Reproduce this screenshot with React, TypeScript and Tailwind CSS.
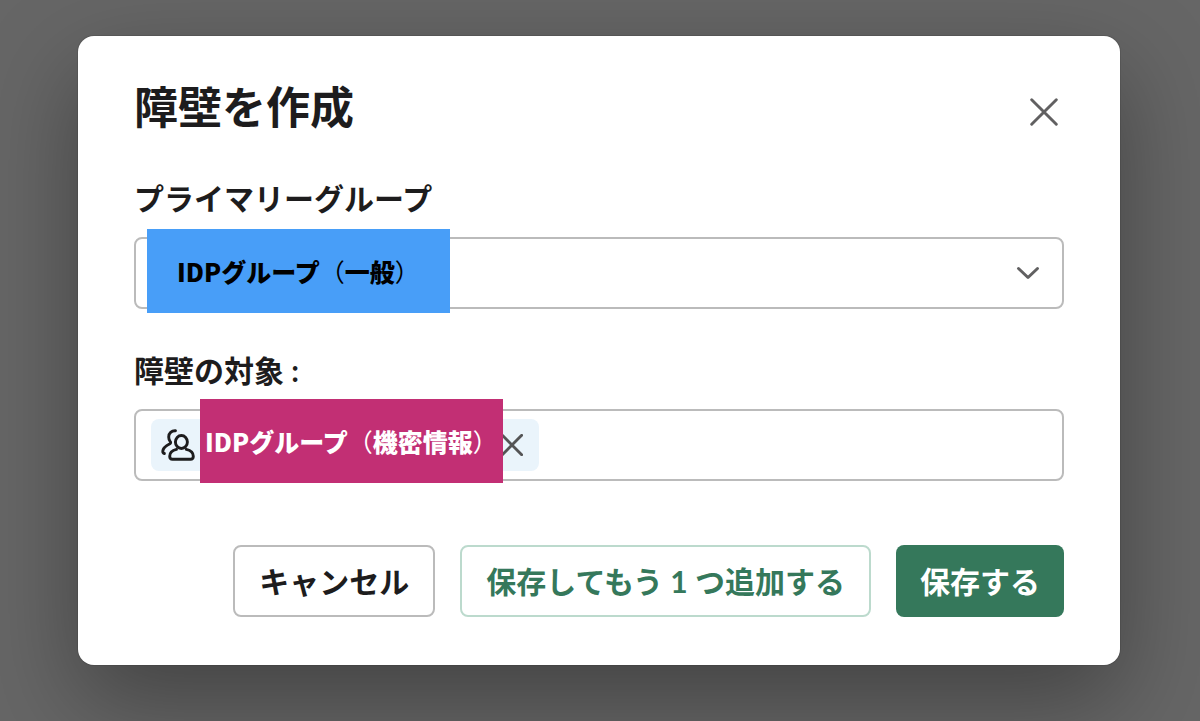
import { useState } from "react";

function CloseIcon({ className }: { className: string }) {
  return (
    <svg viewBox="0 0 28 28" className={className} fill="none" stroke="currentColor" strokeLinecap="round" aria-hidden="true">
      <path d="M1.7 1.7 26.3 26.3M26.3 1.7 1.7 26.3" />
    </svg>
  );
}

function MembersIcon() {
  return (
    <svg
      viewBox="0 0 34 32"
      className="h-8 w-[34px] shrink-0"
      fill="none"
      stroke="currentColor"
      strokeWidth="2.9"
      strokeLinecap="round"
      strokeLinejoin="round"
      aria-hidden="true"
    >
      <path d="M14.5 1.8C10.6 1.6 7.6 4 7.7 8c0 2 .6 3.6 1.7 4.9.5.7.2 1.5-.5 1.9C5 16.800 2 19.2 1.8 22.2c-.1 1.300.5 2.100 1.600 2.300" />
      <ellipse cx="20.4" cy="13" rx="6" ry="6.500" />
      <path d="M15.500 20.300C11.300 21.300 8.700 24.200 8.700 27.200c0 2 1 3 2.800 3h18c1.800 0 2.800-1 2.800-3 0-3-2.600-5.900-7-6.900" />
    </svg>
  );
}

export default function App() {
  const [hasTarget, setHasTarget] = useState(true);

  return (
    <div className="min-h-screen overflow-hidden bg-[#666666] py-9 pr-20 pl-[78px] font-['Lato','Noto_Sans_CJK_JP',sans-serif] text-[30px] leading-[44px] font-bold text-[#1d1c1d]">
      <main
        role="dialog"
        aria-labelledby="dialog-title"
        className="rounded-2xl bg-white px-14 pt-[39px] pb-12 shadow-[0_0_0_1px_rgba(29,28,29,0.13),0_36px_96px_rgba(0,0,0,0.35)]"
      >
        <header className="flex items-center justify-between">
          <h1 id="dialog-title" className="text-[44px] leading-[64px] font-bold">
            障壁を作成
          </h1>
          <button type="button" aria-label="閉じる" className="mt-2.5 flex size-10 items-center justify-center text-[#616061]">
            <CloseIcon className="size-7 stroke-[2.9]" />
          </button>
        </header>

        <form onSubmit={(e) => e.preventDefault()}>
          <div className="mt-[37px]">
            <label htmlFor="primary" className="mb-[17px] block">
              プライマリーグループ
            </label>
            <div className="relative">
              <select
                id="primary"
                className="block h-[72px] w-full appearance-none rounded-lg border-2 border-[#bbbbbb] bg-white px-4"
              >
                <option value="general" aria-label="一般"></option>
              </select>
              <svg
                viewBox="0 0 24 14"
                className="pointer-events-none absolute top-[29px] right-6 h-[14px] w-6 text-[#616061]"
                fill="none"
                stroke="currentColor"
                strokeWidth="3"
                strokeLinecap="round"
                strokeLinejoin="round"
                aria-hidden="true"
              >
                <path d="M2.500 2.500 12 11.500 21.500 2.500" />
              </svg>
              <div className="pointer-events-none absolute -top-2 left-[13px] flex h-[84px] w-[303px] items-center bg-[#489ef8] pl-[30px] font-['Noto_Sans_CJK_JP',sans-serif] text-[25px] font-black whitespace-nowrap text-black">
                <span>
                  IDPグループ<span className="font-normal">（</span>一般<span className="font-normal">）</span>
                </span>
              </div>
            </div>
          </div>

          <div className="mt-[39px]">
            <label htmlFor="target" className="mb-[17px] block">
              障壁の対象 :
            </label>
            <div className="flex h-[72px] items-center gap-3 rounded-lg border-2 border-[#bbbbbb] px-[15px]">
              {hasTarget && (
                <div className="relative flex h-[52px] w-[388px] shrink-0 items-center justify-between rounded-lg bg-[#eaf4fb] pr-4 pl-[10px]">
                  <MembersIcon />
                  <button
                    type="button"
                    aria-label="削除"
                    onClick={() => setHasTarget(false)}
                    className="flex items-center justify-center text-[#545455]"
                  >
                    <CloseIcon className="size-[22px] stroke-[3.6]" />
                  </button>
                  <div className="pointer-events-none absolute -top-5 left-[49px] flex h-[84px] w-[303px] items-center bg-[#c22f74] pl-[5px] font-['Noto_Sans_CJK_JP',sans-serif] text-[25px] font-black whitespace-nowrap text-white">
                    <span>
                      IDPグループ<span className="font-normal">（</span>機密情報<span className="font-normal">）</span>
                    </span>
                  </div>
                </div>
              )}
              <input id="target" type="text" className="min-w-0 flex-1 bg-transparent outline-none" />
            </div>
          </div>

          <footer className="mt-16 flex justify-end gap-[25px]">
            <button type="button" className="h-[72px] rounded-lg border-2 border-[#bbbbbb] px-6 whitespace-nowrap">
              キャンセル
            </button>
            <button
              type="button"
              className="h-[72px] rounded-lg border-2 border-[#bcdacd] px-6 whitespace-nowrap text-[#35785b]"
            >
              保存してもう 1 つ追加する
            </button>
            <button type="submit" className="h-[72px] rounded-lg bg-[#35785b] px-6 whitespace-nowrap text-white">
              保存する
            </button>
          </footer>
        </form>
      </main>
    </div>
  );
}
